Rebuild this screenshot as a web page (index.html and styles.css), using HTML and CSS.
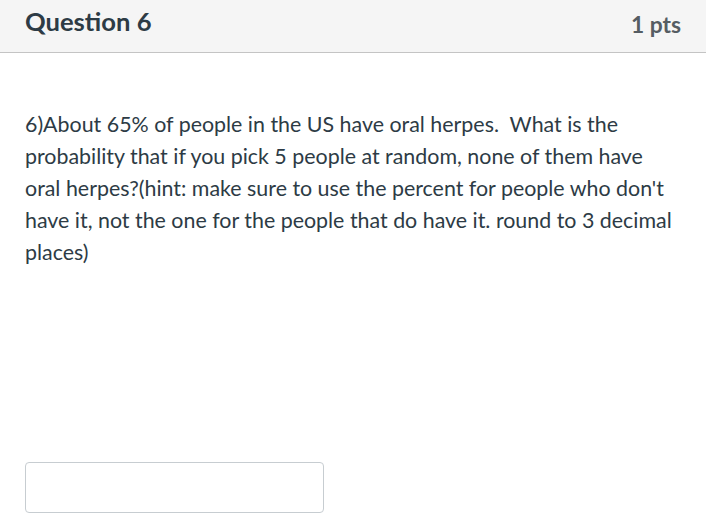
FILE: index.html
```html
<!DOCTYPE html>
<html>
<head>
<meta charset="utf-8">
<link rel="stylesheet" href="styles.css">
</head>
<body>
<div class="question">
  <div class="header">
    <h2 class="title">Question 6</h2>
    <div class="points">1 pts</div>
  </div>
  <div class="content">
    <p class="text">6)About 65% of people in the US have oral herpes.&nbsp; What is the probability that if you pick 5 people at random, none of them have oral herpes?(hint: make sure to use the percent for people who don't have it, not the one for the people that do have it. round to 3 decimal places)</p>
    <div class="answer"><input class="answer-input" type="text"></div>
  </div>
</div>
</body>
</html>
```
FILE: styles.css
```css
html, body {
  margin: 0;
  padding: 0;
  background: #ffffff;
}
body {
  font-family: Lato, "Noto Sans", sans-serif;
  color: #2d3b45;
  width: 706px;
  height: 518px;
  overflow: hidden;
}
.header {
  height: 53px;
  box-sizing: border-box;
  background: #f5f5f5;
  border-bottom: 1px solid #c4c4c4;
  display: flex;
  align-items: center;
  justify-content: space-between;
  padding: 0 25px 0 25px;
}
.title {
  margin: 0;
  font-size: 25.6px;
  font-weight: 700;
  color: #2d3b45;
  position: relative;
  top: -5px;
}
.points {
  font-size: 22.8px;
  font-weight: 700;
  color: #555d63;
  position: relative;
  top: -2px;
}
.content {
  padding: 55px 25px 0 25px;
}
.text {
  margin: 0;
  font-size: 21.4px;
  line-height: 32px;
  color: #2d3b45;
}
.answer {
  margin-top: 194px;
}
.answer-input {
  display: block;
  width: 299px;
  height: 51px;
  box-sizing: border-box;
  border: 1px solid #c7cdd1;
  border-radius: 4px;
  background: #fff;
  margin: 0;
  padding: 0;
}
```
